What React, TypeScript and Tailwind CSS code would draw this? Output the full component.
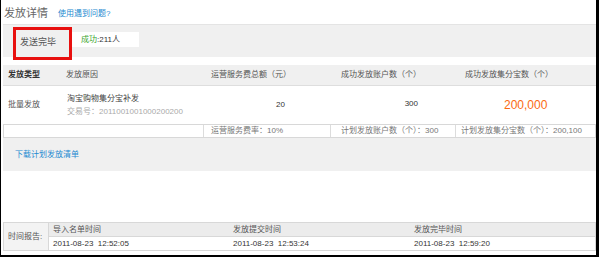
import React from "react";

const font = { fontFamily: '"Liberation Sans", "Noto Sans CJK SC", sans-serif' };

const SummaryCell = ({ children, className = "" }: { children?: React.ReactNode; className?: string }) => (
  <div className={`h-full flex items-center border-l border-[#dcdcdc] whitespace-nowrap ${className}`}>{children}</div>
);

export default function App() {
  return (
    <div
      className="w-[599px] h-[257px] bg-black pl-px pr-[3px] pb-[2px] overflow-hidden"
      style={font}
    >
      <div className="h-full bg-white flex flex-col text-[8px] leading-none text-[#555] pl-[2px] whitespace-nowrap">
        {/* Title */}
        <div className="h-[24px] shrink-0 flex items-end pb-[5px] gap-[10px]">
          <span className="text-[11px] text-[#666] ml-[1px]">发放详情</span>
          <span className="text-[8px] text-[#1d8ad0] mb-[1px]">使用遇到问题?</span>
        </div>

        {/* Status band */}
        <div className="h-[33px] shrink-0 bg-[#f0f0f0] border-t border-[#e4e4e4] flex items-start pt-[2px] pl-[10px]">
          <div className="w-[59px] h-[33px] shrink-0 border-[3px] border-[#e8100f] flex items-center pl-[4px] pb-[3px] text-[9px] text-[#555]">
            发送完毕
          </div>
          <div className="mt-[5px] w-[67px] h-[15px] bg-white flex items-center pl-[9px] text-[8px] text-[#333]">
            <span className="text-[#3ca62e]">成功</span>:211人
          </div>
        </div>

        <div className="h-[8px] shrink-0" />

        {/* Table header */}
        <div className="h-[21px] shrink-0 bg-[#f0f0f0] border-b border-[#dedede] flex items-center text-[#555]">
          <div className="w-[63px] pl-[5px] font-bold text-[#333]">发放类型</div>
          <div className="w-[145px]">发放原因</div>
          <div className="w-[130px]">运营服务费总额（元）</div>
          <div className="w-[124px]">成功发放账户数（个）</div>
          <div>成功发放集分宝数（个）</div>
        </div>

        {/* Data row */}
        <div className="h-[38px] shrink-0 flex items-center">
          <div className="w-[63px] shrink-0 pl-[5px]">批量发放</div>
          <div className="w-[150px] shrink-0 flex flex-col gap-[5px] pl-[1px]">
            <span className="text-[#444]">淘宝购物集分宝补发</span>
            <span className="text-[#aaa]">交易号：2011001001000200200</span>
          </div>
          <div className="w-[69px] shrink-0 text-right text-[#333]">20</div>
          <div className="w-[133px] shrink-0 text-right text-[#333] -mt-[2px]">300</div>
          <div className="pl-[86px] text-[12px] text-[#fb6a12]">200,000</div>
        </div>

        {/* Summary row */}
        <div className="h-[14px] shrink-0 flex border border-[#d8d8d8] text-[#777]">
          <div className="w-[199px] shrink-0" />
          <SummaryCell className="w-[127px] shrink-0 pl-[7px]">运营服务费率：10%</SummaryCell>
          <SummaryCell className="w-[125px] shrink-0 pl-[10px]">计划发放账户数（个）：300</SummaryCell>
          <SummaryCell className="flex-1 pl-[5px]">计划发放集分宝数（个）：200,100</SummaryCell>
        </div>

        {/* Download band */}
        <div className="h-[33px] shrink-0 bg-[#f0f0f0] flex items-center pl-[12px] text-[#1d8ad0]">
          下载计划发放清单
        </div>

        <div className="flex-1" />

        {/* Time report */}
        <div className="h-[29px] shrink-0 mb-[4px] flex border border-[#d8d8d8]">
          <div className="w-[45px] shrink-0 bg-[#f3f3f3] flex items-center pl-[4px] text-[#555] border-r border-[#d8d8d8]">
            时间报告:
          </div>
          <div className="flex-1 flex flex-col">
            <div className="h-[14px] bg-[#ececec] border-b border-[#d8d8d8] flex items-center text-[#555]">
              <div className="w-[180px] pl-[4px]">导入名单时间</div>
              <div className="w-[181px] pl-[4px]">发放提交时间</div>
              <div className="pl-[4px]">发放完毕时间</div>
            </div>
            <div className="flex-1 flex items-center text-[#333]">
              <div className="w-[180px] pl-[4px]">2011-08-23&nbsp; 12:52:05</div>
              <div className="w-[181px] pl-[4px]">2011-08-23&nbsp; 12:53:24</div>
              <div className="pl-[4px]">2011-08-23&nbsp; 12:59:20</div>
            </div>
          </div>
        </div>
      </div>
    </div>
  );
}
